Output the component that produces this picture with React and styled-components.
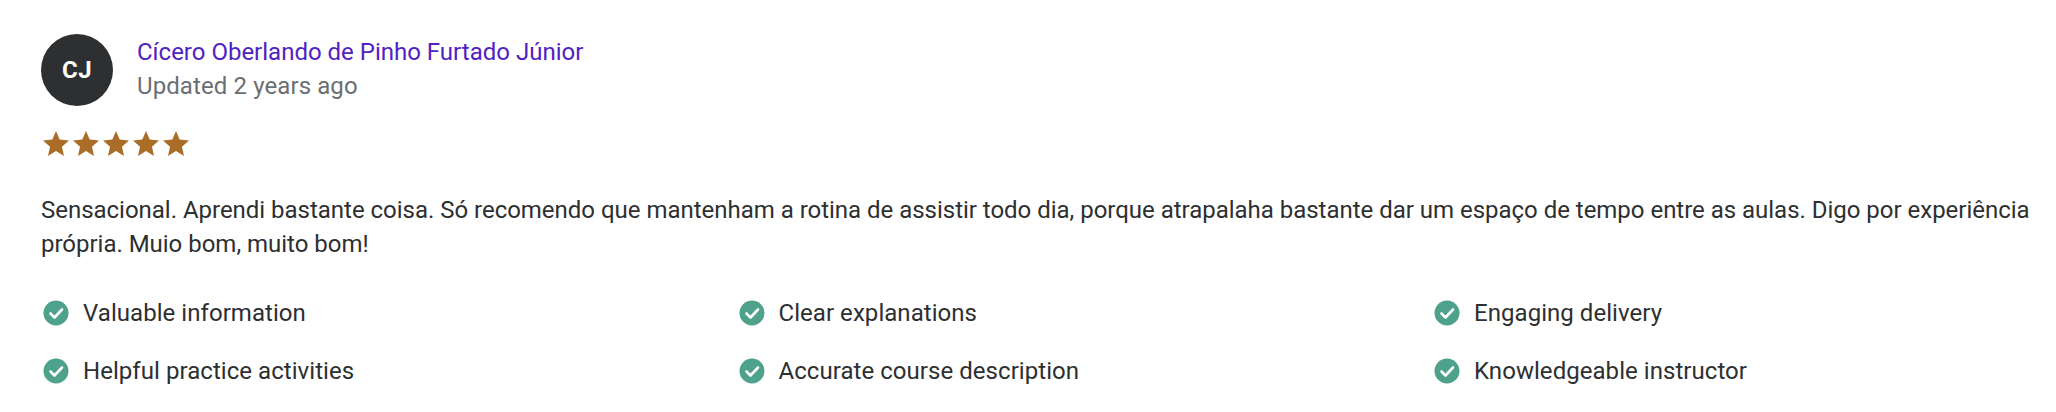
import React from "react";
import styled, { createGlobalStyle } from "styled-components";

const Global = createGlobalStyle`
  html, body { margin: 0; padding: 0; background: #fff; }
  body { font-family: "Roboto", "Liberation Sans", sans-serif; color: #2d2f31; }
`;
const Card = styled.article`
  width: 2056px; height: 412px; box-sizing: border-box;
  padding: 34px 0 0 41px; overflow: hidden;
`;
const Header = styled.header`display: flex; align-items: center; gap: 24px; height: 72px;`;
const Avatar = styled.div`
  width: 72px; height: 72px; border-radius: 50%; background: #2d2f31; color: #fff;
  display: flex; align-items: center; justify-content: center;
  font-size: 24px; font-weight: 700; letter-spacing: 0.5px;
`;
const Meta = styled.div`display: flex; flex-direction: column; margin-top: -2px;`;
const Name = styled.a`font-size: 24px; line-height: 34px; color: #5022c3;`;
const Updated = styled.div`font-size: 24px; line-height: 34px; color: #6a6f73; letter-spacing: 0.1px;`;
const Stars = styled.div`display: flex; gap: 4px; margin: 25px 0 0 2px;`;
const Body = styled.p`
  margin: 37px 0 0; width: 2000px; font-size: 24px; line-height: 34px; color: #2d2f31; letter-spacing: -0.02px;
`;
const Tags = styled.ul`
  list-style: none; margin: 35px 0 0; padding: 0;
  display: grid; grid-template-columns: repeat(3, 695.5px); row-gap: 24px;
`;
const Tag = styled.li`display: flex; align-items: center; gap: 14px; height: 34px; font-size: 24px; padding-left: 2px; letter-spacing: 0.05px;`;

const Star = () => (
  <svg width="26" height="25" viewBox="0 0 24 23"><path fill="#a96d28" d="M12 0l3.4 7.9 8.6.8-6.5 5.7 1.9 8.6L12 18.5 4.6 23l1.9-8.6L0 8.7l8.6-.8z"/></svg>
);
const Check = () => (
  <svg width="26" height="26" viewBox="0 0 26 26">
    <circle cx="13" cy="13" r="12.5" fill="#4ea18a"/>
    <path d="M7.5 13.5l4 4 7.5-8" fill="none" stroke="#fff" strokeWidth="2.6" strokeLinecap="round" strokeLinejoin="round"/>
  </svg>
);
const tags = ["Valuable information","Clear explanations","Engaging delivery","Helpful practice activities","Accurate course description","Knowledgeable instructor"];

export default function App() {
  return (
    <Card>
      <Global />
      <Header>
        <Avatar>CJ</Avatar>
        <Meta>
          <Name>Cícero Oberlando de Pinho Furtado Júnior</Name>
          <Updated>Updated 2 years ago</Updated>
        </Meta>
      </Header>
      <Stars>{[0,1,2,3,4].map(i => <Star key={i} />)}</Stars>
      <Body>Sensacional. Aprendi bastante coisa. Só recomendo que mantenham a rotina de assistir todo dia, porque atrapalaha bastante dar um espaço de tempo entre as aulas. Digo por experiência própria. Muio bom, muito bom!</Body>
      <Tags>{tags.map(t => <Tag key={t}><Check />{t}</Tag>)}</Tags>
    </Card>
  );
}
